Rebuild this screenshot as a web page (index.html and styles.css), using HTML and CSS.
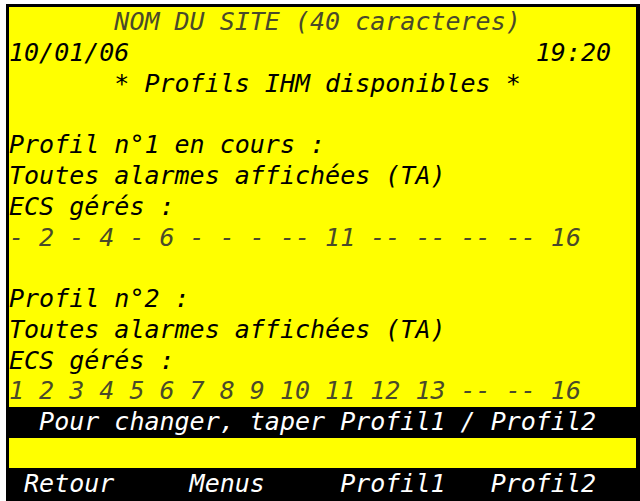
FILE: index.html
```html
<!DOCTYPE html>
<html lang="fr">
<head>
<meta charset="utf-8">
<title>Profils IHM</title>
<link rel="stylesheet" href="styles.css">
</head>
<body>
<div class="screen">
  <div class="row"><span class="line dim">       NOM DU SITE (40 caracteres)</span></div>
  <div class="row"><span class="line split"><span>10/01/06</span><span>19:20</span></span></div>
  <div class="row"><span class="line">       * Profils IHM disponibles *</span></div>
  <div class="row"></div>
  <div class="row"><span class="line">Profil n°1 en cours :</span></div>
  <div class="row"><span class="line">Toutes alarmes affichées (TA)</span></div>
  <div class="row"><span class="line">ECS gérés :</span></div>
  <div class="row"><span class="line dim">- 2 - 4 - 6 - - - -- 11 -- -- -- -- 16</span></div>
  <div class="row"></div>
  <div class="row"><span class="line">Profil n°2 :</span></div>
  <div class="row"><span class="line">Toutes alarmes affichées (TA)</span></div>
  <div class="row"><span class="line">ECS gérés :</span></div>
  <div class="row"><span class="line dim">1 2 3 4 5 6 7 8 9 10 11 12 13 -- -- 16</span></div>
  <div class="row inverse"><span class="line">  Pour changer, taper Profil1 / Profil2</span></div>
  <div class="row"></div>
  <div class="row inverse"><span class="line"> Retour     Menus     Profil1   Profil2</span></div>
</div>
</body>
</html>
```
FILE: styles.css
```css
html, body {
  margin: 0;
  padding: 0;
  background: #ffffff;
  overflow: hidden;
}

.screen {
  margin: 4px 0 0 6px;
  width: 627px;
  height: 492px;
  border-style: solid;
  border-color: #000000;
  border-width: 3px 4px 3px 3px;
  background: #ffff00;
  display: grid;
  grid-template-rows: repeat(16, 1fr);
  font-family: "DejaVu Sans Mono", monospace;
  font-style: italic;
  font-size: 25px;
  color: #000000;
}

.row {
  display: flex;
  align-items: center;
  overflow: hidden;
}

.line {
  display: block;
  width: 40ch;
  white-space: pre;
  line-height: 30px;
}

.split {
  display: flex;
  justify-content: space-between;
}

.dim {
  color: #4a4a2a;
}

.inverse {
  background: #000000;
  color: #ffffff;
}
```
